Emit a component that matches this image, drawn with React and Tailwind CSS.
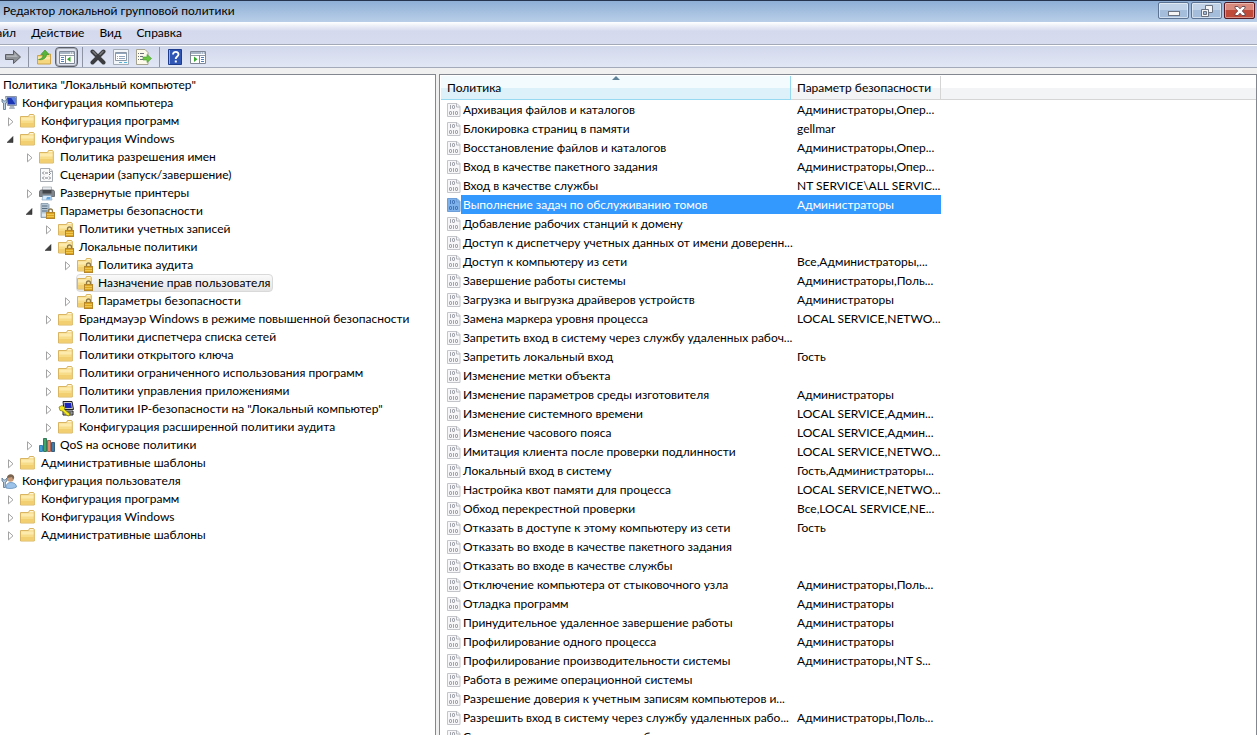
import React, { useState } from 'react';
import clsx from 'clsx';

const TREE = [
  {
    label: 'Конфигурация компьютера', icon: 'computer', children: [
      { label: 'Конфигурация программ', icon: 'folder', state: 'closed' },
      {
        label: 'Конфигурация Windows', icon: 'folder', state: 'open', children: [
          { label: 'Политика разрешения имен', icon: 'folder', state: 'closed' },
          { label: 'Сценарии (запуск/завершение)', icon: 'script' },
          { label: 'Развернутые принтеры', icon: 'printer', state: 'closed' },
          {
            label: 'Параметры безопасности', icon: 'server', state: 'open', children: [
              { label: 'Политики учетных записей', icon: 'locked', state: 'closed' },
              {
                label: 'Локальные политики', icon: 'locked', state: 'open', children: [
                  { label: 'Политика аудита', icon: 'locked', state: 'closed' },
                  { label: 'Назначение прав пользователя', icon: 'locked' },
                  { label: 'Параметры безопасности', icon: 'locked', state: 'closed' },
                ],
              },
              { label: 'Брандмауэр Windows в режиме повышенной безопасности', icon: 'folder', state: 'closed' },
              { label: 'Политики диспетчера списка сетей', icon: 'folder' },
              { label: 'Политики открытого ключа', icon: 'folder', state: 'closed' },
              { label: 'Политики ограниченного использования программ', icon: 'folder', state: 'closed' },
              { label: 'Политики управления приложениями', icon: 'folder', state: 'closed' },
              { label: 'Политики IP-безопасности на "Локальный компьютер"', icon: 'ipsec', state: 'closed' },
              { label: 'Конфигурация расширенной политики аудита', icon: 'folder', state: 'closed' },
            ],
          },
          { label: 'QoS на основе политики', icon: 'qos', state: 'closed' },
        ],
      },
      { label: 'Административные шаблоны', icon: 'folder', state: 'closed' },
    ],
  },
  {
    label: 'Конфигурация пользователя', icon: 'user', children: [
      { label: 'Конфигурация программ', icon: 'folder', state: 'closed' },
      { label: 'Конфигурация Windows', icon: 'folder', state: 'closed' },
      { label: 'Административные шаблоны', icon: 'folder', state: 'closed' },
    ],
  },
];

const POLICIES = [
  ['Архивация файлов и каталогов', 'Администраторы,Опер...'],
  ['Блокировка страниц в памяти', 'gellmar'],
  ['Восстановление файлов и каталогов', 'Администраторы,Опер...'],
  ['Вход в качестве пакетного задания', 'Администраторы,Опер...'],
  ['Вход в качестве службы', 'NT SERVICE\\ALL SERVIC...'],
  ['Выполнение задач по обслуживанию томов', 'Администраторы'],
  ['Добавление рабочих станций к домену', ''],
  ['Доступ к диспетчеру учетных данных от имени доверенн...', ''],
  ['Доступ к компьютеру из сети', 'Все,Администраторы,...'],
  ['Завершение работы системы', 'Администраторы,Поль...'],
  ['Загрузка и выгрузка драйверов устройств', 'Администраторы'],
  ['Замена маркера уровня процесса', 'LOCAL SERVICE,NETWO...'],
  ['Запретить вход в систему через службу удаленных рабоч...', ''],
  ['Запретить локальный вход', 'Гость'],
  ['Изменение метки объекта', ''],
  ['Изменение параметров среды изготовителя', 'Администраторы'],
  ['Изменение системного времени', 'LOCAL SERVICE,Админ...'],
  ['Изменение часового пояса', 'LOCAL SERVICE,Админ...'],
  ['Имитация клиента после проверки подлинности', 'LOCAL SERVICE,NETWO...'],
  ['Локальный вход в систему', 'Гость,Администраторы...'],
  ['Настройка квот памяти для процесса', 'LOCAL SERVICE,NETWO...'],
  ['Обход перекрестной проверки', 'Все,LOCAL SERVICE,NE...'],
  ['Отказать в доступе к этому компьютеру из сети', 'Гость'],
  ['Отказать во входе в качестве пакетного задания', ''],
  ['Отказать во входе в качестве службы', ''],
  ['Отключение компьютера от стыковочного узла', 'Администраторы,Поль...'],
  ['Отладка программ', 'Администраторы'],
  ['Принудительное удаленное завершение работы', 'Администраторы'],
  ['Профилирование одного процесса', 'Администраторы'],
  ['Профилирование производительности системы', 'Администраторы,NT S...'],
  ['Работа в режиме операционной системы', ''],
  ['Разрешение доверия к учетным записям компьютеров и...', ''],
  ['Разрешить вход в систему через службу удаленных рабо...', 'Администраторы,Поль...'],
  ['Синхронизировать данные службы каталогов', ''],
];

const Svg = ({ children, className = 'size-4' }) => (
  <svg viewBox="0 0 16 16" className={clsx('shrink-0', className)} aria-hidden="true">{children}</svg>
);

const FolderShape = () => (
  <>
    <path d="M.5 3.500h8l1-2h4l.8 1v11.500H.5z" fill="#f7dc8a" stroke="#d9b562" />
    <path d="M1 4.500h12.500v3H1z" fill="#fdebae" />
    <path d="M1 10h12.800v3.500H1z" fill="#f2cf70" />
    <path d="M9.800 2.700h3.500" stroke="#fffbe6" />
  </>
);

const ICONS = {
  folder: <Svg><FolderShape /></Svg>,
  locked: (
    <Svg>
      <FolderShape />
      <path d="M9.500 10V8a2 2 0 0 1 4 0v2" fill="none" stroke="#8d7a4a" strokeWidth="1.300" />
      <rect x="7.500" y="9.500" width="8" height="6" fill="#dca51f" stroke="#b5862c" />
      <path d="M8 11.500h7M8 13.500h7" stroke="#f4cf5d" strokeWidth=".8" />
    </Svg>
  ),
  computer: (
    <Svg>
      <path d="M4.500 1.500h11v9h-9z" fill="#c9d3df" stroke="#8894a5" />
      <path d="M6 2.500h8.500v7H7z" fill="#1c36b4" />
      <path d="M10 2.500h4.500v7z" fill="#5c82e2" />
      <path d="M9 11h4l1 3H8z" fill="#aeb6c2" />
      <path d="M1 4v3l1.500 1v6.500h2V8L6 7V4L4.500 6h-2z" fill="#bed2e3" stroke="#526f8b" strokeWidth=".8" />
    </Svg>
  ),
  user: (
    <Svg>
      <path d="M5 15c0-4 2-5.500 5-5.500S15.500 11 15.500 14c-2 1.500-7 2-10.500 1z" fill="#9cc3ea" stroke="#5c86b5" strokeWidth=".7" />
      <circle cx="9.500" cy="5.500" r="3.300" fill="#c99a78" />
      <path d="M6 5c0-5 7.500-5 7.200 0L12 6.500 11 4 6.500 5z" fill="#7b6551" />
      <path d="M1 5v3l1.500 1v5.500h1.800V9L6 8V5L4.300 7H2.600z" fill="#bed2e3" stroke="#526f8b" strokeWidth=".8" />
    </Svg>
  ),
  script: (
    <Svg>
      <path d="M1.500 1.500h9.500l2.500 2.500v10.500h-12z" fill="#fafafa" stroke="#a6abb2" />
      <path d="M10.500 1.500v3h3" fill="none" stroke="#a6abb2" />
      <path d="M5 4.500L3.500 6 5 7.500M10 5l1.500 1.500L10 8M5 9.500L3.500 11 5 12.500M10 9.500l1.500 1.500-1.500 1.500M6 6h3M6 11h3" fill="none" stroke="#747b85" />
    </Svg>
  ),
  printer: (
    <Svg>
      <path d="M3.500 2h9v5h-9z" fill="#e9edf1" stroke="#9da4ab" strokeWidth=".7" />
      <path d="M.5 6.500l1-1.500h13l1 1.500v5H.5z" fill="#80858b" stroke="#5b6065" strokeWidth=".8" />
      <path d="M3.500 5h9v3.500h-9z" fill="#44484c" />
      <path d="M4 10.500h8l1 4.500H3z" fill="#d9ebfb" stroke="#86a3bd" strokeWidth=".7" />
      <path d="M8 12h3.500v2.500H7z" fill="#64a6e0" />
    </Svg>
  ),
  server: (
    <Svg>
      <path d="M2 .5h7l1 1v13H2z" fill="#b4c5d4" stroke="#8095a8" strokeWidth=".8" />
      <path d="M3 3h5.500M3 5.500h5.500M3 8h5.500" stroke="#566c80" />
      <path d="M3 10.500h4v3H3z" fill="#dce8f2" />
      <path d="M9.500 9.500V8a2 2 0 0 1 4 0v1.500" fill="none" stroke="#8d7a4a" strokeWidth="1.300" />
      <rect x="7.500" y="9.500" width="8" height="6" fill="#dca51f" stroke="#b5862c" />
      <path d="M8 11.500h7M8 13.500h7" stroke="#f4cf5d" strokeWidth=".8" />
    </Svg>
  ),
  ipsec: (
    <Svg>
      <path d="M5 .5h9l1.500 8H6z" fill="#c8c8c8" stroke="#222" />
      <path d="M6.500 2h6.500l.8 5H7z" fill="#1a27b8" />
      <path d="M5 10h10v4H5z" fill="#bcbcbc" stroke="#222" />
      <path d="M10 12h3.500" stroke="#222" />
      <path d="M1 6l3-1.500 3 2-.5 2L12 13l-1 2-2-.5L4.500 10 2 9.500z" fill="#f4e91f" stroke="#75700b" strokeWidth=".7" />
    </Svg>
  ),
  qos: (
    <Svg>
      <path d="M.5 8.500h3v6h-3z" fill="#3b9fd8" stroke="#1d6c9e" strokeWidth=".8" />
      <path d="M4.500 1.500h3v13h-3z" fill="#3fa869" stroke="#1b5f3d" strokeWidth=".8" />
      <path d="M8.500 3.500h3v11h-3z" fill="#e2886b" stroke="#8f4939" strokeWidth=".8" />
      <path d="M12.500 5.500h3v9h-3z" fill="#3e7ba8" stroke="#1e4566" strokeWidth=".8" />
    </Svg>
  ),
};

// 0/1 document icon in front of each policy
const PolicyIcon = ({ selected }) => (
  <svg viewBox="0 0 14 14" className="size-3.5 shrink-0" aria-hidden="true">
    <path d="M.5 .5H10l3 3v10H.5z" fill={selected ? '#7fb2ea' : '#f7f7f9'} stroke={selected ? '#6f9fd8' : '#c3c5ca'} />
    <path d="M9.500 .5V4H13" fill="none" stroke={selected ? '#6f9fd8' : '#b4b6bb'} />
    <g fill="none" stroke={selected ? '#4276b8' : '#a3a5ac'}>
      <path d="M3.500 2v4M6.500 8v4" />
      <rect x="5.500" y="2.500" width="2" height="3" rx=".5" />
      <rect x="2.500" y="8.500" width="2" height="3" rx=".5" />
      <rect x="8.500" y="8.500" width="2" height="3" rx=".5" />
    </g>
  </svg>
);

const Arrow = ({ state }) => (
  <svg viewBox="0 0 8 10" className="mt-0.5 h-2.5 w-2 shrink-0" aria-hidden="true">
    {state === 'closed' && <path d="M1.500 .8v8L6 4.800z" fill="#fff" stroke="#a3a3a3" />}
    {state === 'open' && <path d="M6 1.500v6H0z" fill="#404040" stroke="#222" strokeWidth=".5" />}
  </svg>
);

const TreeItem = ({ node, selected, onSelect }) => (
  <li>
    <div className="flex h-[18px] items-center gap-1">
      <Arrow state={node.state} />
      <button
        onClick={() => onSelect(node)}
        className={clsx(
          'flex h-[18px] items-center gap-[5px] rounded-sm border pr-0.5 whitespace-nowrap',
          selected === node ? 'border-[#d9d9d9] bg-linear-to-b from-[#fafafa] to-[#e5e5e5]' : 'border-transparent'
        )}
      >
        {ICONS[node.icon]}
        {node.label}
      </button>
    </div>
    {node.children && (
      <ul className="pl-[19px]">
        {node.children.map((child, idx) => (
          <TreeItem key={idx} node={child} selected={selected} onSelect={onSelect} />
        ))}
      </ul>
    )}
  </li>
);

const WindowFrame = ({ side }) => (
  <>
    <path d="M.5 2.500h15v12H.5z" fill="#fff" stroke="#7e8896" />
    <path d="M1 3h14v2H1z" fill="#a9b6c6" />
    <path d="M11 4h1M13 4h1" stroke="#fff" />
    <path d="M1 6.500h14" stroke="#8f98a5" />
    {side === 'left' ? (
      <>
        <path d="M6.500 6v8.500" stroke="#7e8896" />
        <path d="M2 8.500h3M2 10.500h3M2 12.500h3" stroke="#4f83bd" />
        <path d="M11.500 7.500v5.500L8 10.300z" fill="#36a82f" />
      </>
    ) : (
      <>
        <path d="M9.500 6v8.500" stroke="#7e8896" />
        <path d="M11 8.500h3M11 10.500h3M11 12.500h3" stroke="#4f83bd" />
        <path d="M4 7.500v5.500l3.500-2.700z" fill="#36a82f" />
      </>
    )}
  </>
);

const Separator = () => (
  <div className="flex w-2 justify-center">
    <div className="h-5 w-px bg-[#8d93a3]" />
  </div>
);

const ToolButton = ({ label, pressed, children }) => (
  <button
    aria-label={label}
    className={clsx(
      'flex h-5 w-[23px] items-center justify-center rounded-sm border',
      pressed ? 'border-[#5c6069] bg-[#dfe3ef] inset-ring inset-ring-[#a5aab6]' : 'border-transparent'
    )}
  >
    <Svg>{children}</Svg>
  </button>
);

const Toolbar = () => (
  <div className="flex h-[22px] shrink-0 items-center border-b border-[#a3abbb] bg-linear-to-b from-[#d2d8ec] to-[#e2e7f5] pl-px">
    <ToolButton label="Вперед">
      <path d="M.5 5.500h8v-4l7 6.500-7 6.500v-4h-8z" fill="#8f9297" stroke="#5c5f64" />
      <path d="M1.500 6.500h8V4l3.500 4H1.500z" fill="#b0b3b8" />
    </ToolButton>
    <Separator />
    <ToolButton label="Вверх">
      <path d="M1.500 6.500h5l1-1.500h7v10h-13z" fill="#f4d77e" stroke="#cda448" />
      <path d="M2 8h12v2.500H2z" fill="#fbe9a9" />
      <path d="M2.500 10.500C6 10 7 8 7 5.500H4.800L9 1l4 4.500h-2.500C10.500 9 7 11.500 2.500 10.500z" fill="#57b53a" stroke="#2f8a22" strokeWidth=".6" />
    </ToolButton>
    <ToolButton label="Показать или скрыть дерево консоли" pressed>
      <WindowFrame side="left" />
    </ToolButton>
    <Separator />
    <ToolButton label="Удалить">
      <path d="M2.500 2.500l11 11M13.500 2.500l-11 11" stroke="#3b3d41" strokeWidth="4" strokeLinecap="round" />
      <path d="M3 2.500l3 3M13 2.500l-3 3" stroke="#77797d" strokeWidth="1.500" strokeLinecap="round" />
    </ToolButton>
    <ToolButton label="Свойства">
      <path d="M.5 .5h15v15H.5z" fill="#f3f6f9" stroke="#a3abb6" />
      <path d="M2.500 3.500h11v8h-11z" fill="#fff" stroke="#8a98a8" />
      <path d="M3 4.500h10M4 7.500h1M6 7.500h6M4 9.500h1M6 9.500h6" stroke="#8fa6bd" />
      <path d="M6 13.500h3M11 13.500h3" stroke="#52b3d8" />
    </ToolButton>
    <ToolButton label="Экспортировать список">
      <path d="M.5 .5h8.500l3 3v12H.5z" fill="#fdfaec" stroke="#a6a48f" />
      <path d="M2 4.500h1M4 4.500h4M2 7.500h1M4 7.500h3M2 10.500h1M4 10.500h3" stroke="#6c7078" />
      <path d="M7 8h4V5.500l4.500 4-4.500 4V11H7z" fill="#6cc644" stroke="#3d9a27" strokeWidth=".6" />
    </ToolButton>
    <Separator />
    <ToolButton label="Справка">
      <path d="M1.500 .5h13v15h-13z" fill="#2f55b5" stroke="#1d3c8e" />
      <path d="M2.500 1v14" stroke="#91abe3" />
      <path d="M6 5.500c0-3.500 5.500-3.500 5.500 0C11.500 7.500 8.700 7.500 8.700 10" fill="none" stroke="#fff" strokeWidth="1.800" />
      <path d="M7.800 11.500h2v2h-2z" fill="#fff" />
    </ToolButton>
    <ToolButton label="Показать или скрыть панель действий">
      <WindowFrame side="right" />
    </ToolButton>
  </div>
);

const TitleBar = () => (
  <header className="flex h-[22px] shrink-0 items-start justify-between border-t border-[#26344d] bg-linear-to-b from-[#8fafd6] to-[#b9cfe8] pl-[3px]">
    <h1 className="leading-5">Редактор локальной групповой политики</h1>
    <div className="mt-px flex gap-0.5 pr-0.5">
      <button aria-label="Свернуть" className="flex h-[17px] w-[31px] items-center justify-center rounded-xs border border-[#5d7393] bg-linear-to-b from-[#bfd2e8] from-50% to-[#a3bddb] to-50% inset-ring inset-ring-white/50">
        <svg viewBox="0 0 12 12" className="size-3" aria-hidden="true">
          <rect x=".5" y="6.500" width="11" height="4" fill="#f5f5f5" stroke="#6b7280" />
        </svg>
      </button>
      <button aria-label="Развернуть" className="flex h-[17px] w-[31px] items-center justify-center rounded-xs border border-[#5d7393] bg-linear-to-b from-[#bfd2e8] from-50% to-[#a3bddb] to-50% inset-ring inset-ring-white/50">
        <svg viewBox="0 0 12 12" className="size-3" aria-hidden="true">
          <path d="M4.500 .5h7v7h-7z" fill="#f5f5f5" stroke="#6b7280" />
          <path d="M.5 4.500h7v7h-7z" fill="#f5f5f5" stroke="#6b7280" />
          <path d="M2.500 6.500h3v3h-3z" fill="#9db8d8" stroke="#6b7280" />
        </svg>
      </button>
      <button aria-label="Закрыть" className="flex h-[17px] w-[31px] items-center justify-center rounded-xs border border-[#551923] bg-linear-to-b from-[#d98a7c] from-50% to-[#bf4a3a] to-50% inset-ring inset-ring-white/40">
        <svg viewBox="0 0 12 12" className="size-3" aria-hidden="true">
          <path d="M1 1.500h3L6 3.800 8 1.500h3v1.800L8.200 6 11 8.700v1.800H8L6 8.200 4 10.500H1V8.700L3.800 6 1 3.300z" fill="#fff" stroke="#63444b" strokeWidth=".9" />
        </svg>
      </button>
    </div>
  </header>
);

const MenuBar = () => (
  <nav className="-ml-5 flex h-6 shrink-0 items-center gap-[15px] border-b border-white bg-linear-to-b from-white via-[#d4d9ed] via-40% to-[#d7dcef] pb-px pl-[7px] shadow-[inset_0_-1px_0_#a4a9b8]">
    <button>Файл</button>
    <button>Действие</button>
    <button>Вид</button>
    <button>Справка</button>
  </nav>
);

const App = () => {
  const [selectedNode, setSelectedNode] = useState(TREE[0].children[1].children[3].children[1].children[1]);
  const [selectedPolicy, setSelectedPolicy] = useState(5);

  return (
    <div className="flex h-screen flex-col overflow-hidden bg-[#f0f0f0] font-['Lato','Open_Sans',sans-serif] text-xs text-black">
      <TitleBar />
      <MenuBar />
      <Toolbar />

      <main className="flex min-h-0 flex-1 gap-[3px] pt-1.5">
        {/* Console tree */}
        <aside className="w-[436px] shrink-0 overflow-hidden border-t border-r border-[#828790] bg-white pt-px">
          <div className="flex h-[18px] items-center pl-[3px]">Политика "Локальный компьютер"</div>
          <ul className="-ml-3">
            {TREE.map((node, idx) => (
              <TreeItem key={idx} node={node} selected={selectedNode} onSelect={setSelectedNode} />
            ))}
          </ul>
        </aside>

        {/* Policy list */}
        <section className="min-w-0 flex-1 overflow-hidden border border-b-0 border-[#828790] bg-white pt-px pl-px">
          <table className="w-full table-fixed border-separate border-spacing-0">
            <colgroup>
              <col className="w-[350px]" />
              <col className="w-[150px]" />
              <col />
            </colgroup>
            <thead>
              <tr className="h-6 text-left">
                <th className="relative border-r border-b border-[#96d9f0] bg-linear-to-b from-[#f3fbfe] from-50% to-[#dcf1f9] to-50% pl-1.5 font-normal">
                  Политика
                  <svg viewBox="0 0 8 4" className="absolute inset-x-0 top-0 mx-auto h-1 w-2" aria-hidden="true">
                    <path d="M4 0l4 4H0z" fill="#5f8298" />
                  </svg>
                </th>
                <th className="border-r border-b border-[#d5d5d5] bg-linear-to-b from-white from-50% to-[#f3f4f5] to-50% pl-1.5 font-normal">
                  Параметр безопасности
                </th>
                <td className="border-b border-[#d5d5d5] bg-linear-to-b from-white from-50% to-[#f3f4f5] to-50%" />
              </tr>
            </thead>
            <tbody>
              {POLICIES.map(([name, value], idx) => {
                const selected = idx === selectedPolicy;
                return (
                  <tr key={name} onClick={() => setSelectedPolicy(idx)} className="h-[19px] whitespace-nowrap">
                    <td className="p-0 pl-1.5">
                      <div className="flex h-[19px] items-center">
                        <PolicyIcon selected={selected} />
                        <span className={clsx('h-[19px] flex-1 pl-0.5 leading-[19px]', selected && 'bg-[#3399ff] text-white')}>
                          {name}
                        </span>
                      </div>
                    </td>
                    <td className={clsx('p-0 pl-1.5', selected && 'bg-[#3399ff] text-white')}>{value}</td>
                    <td className="p-0" />
                  </tr>
                );
              })}
            </tbody>
          </table>
        </section>
      </main>
    </div>
  );
};

export default App;
